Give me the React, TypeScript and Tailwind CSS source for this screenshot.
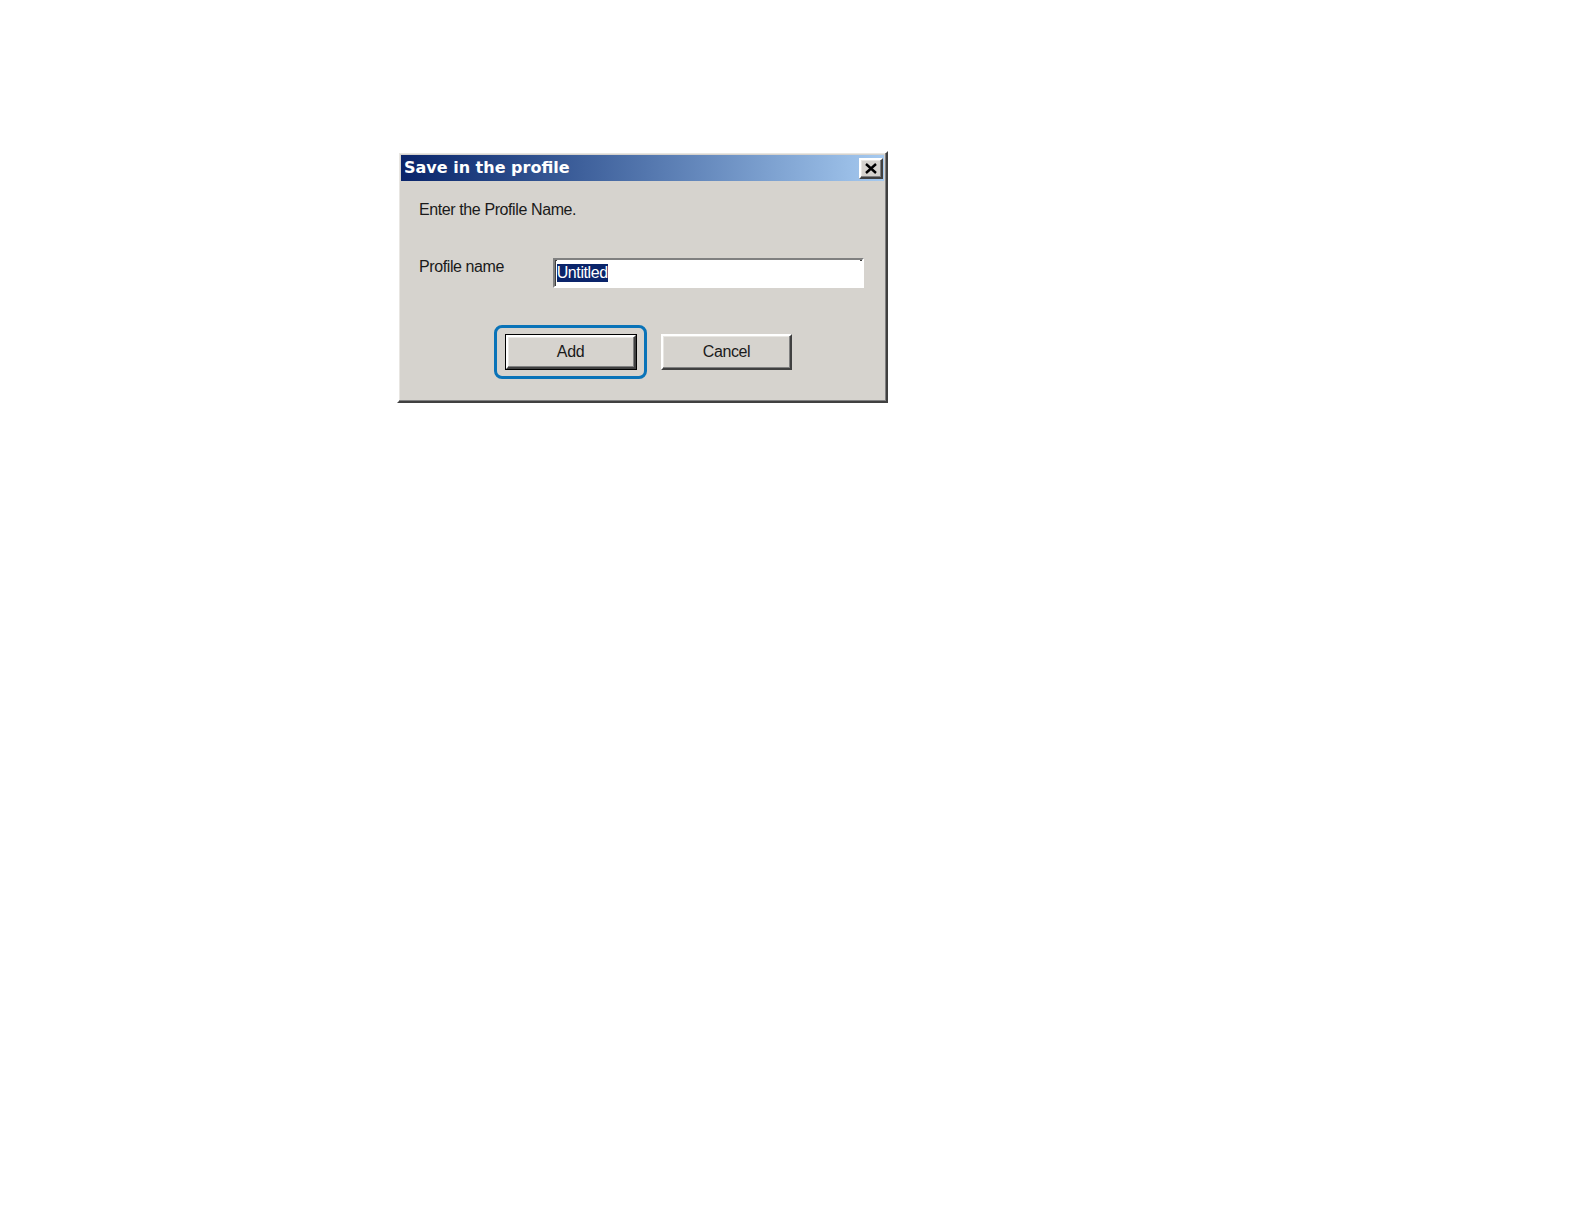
import { useEffect, useRef } from "react";

const bevelOut =
  "border-2 border-t-[#ffffff] border-l-[#ffffff] border-r-[#404040] border-b-[#404040] shadow-[inset_-1px_-1px_0_#808080,inset_1px_1px_0_#e8e6e2]";

const App = () => {
  const inputRef = useRef<HTMLInputElement>(null);

  useEffect(() => {
    inputRef.current?.focus();
    inputRef.current?.select();
  }, []);

  return (
    <div className="min-h-[1224px] w-full bg-white pt-[151px] pl-[397px]">
      <div className={`w-[491px] h-[252px] bg-[#d6d3ce] p-[2px] flex flex-col ${bevelOut}`}>
        {/* title bar */}
        <div className="h-[26px] flex items-center justify-between pl-[3px] pr-[1px] bg-gradient-to-r from-[#0a246a] to-[#a6caf0]">
          <span className="text-white font-bold text-[16px] [font-family:'DejaVu_Sans',sans-serif]">
            Save in the profile
          </span>
          <button
            className={`w-[24px] h-[21px] bg-[#d6d3ce] flex items-center justify-center ${bevelOut}`}
          >
            <svg width="12" height="11" viewBox="0 0 12 11">
              <path d="M1 1 L11 10 M11 1 L1 10" stroke="#000" strokeWidth="2.4" />
            </svg>
          </button>
        </div>

        {/* body */}
        <div className="flex-1 flex flex-col pl-[18px] pr-[20px] [font-family:'Liberation_Sans',Arial,sans-serif] text-[16px] text-[#1a1a1a] tracking-[-0.4px]">
          <p className="mt-[19px] leading-[20px]">Enter the Profile Name.</p>

          <div className="mt-[38px] flex items-start">
            <label className="w-[134px] leading-[20px] -mt-[1px]">Profile name</label>
            <div className="w-[312px] h-[30px] border-2 border-t-[#808080] border-l-[#808080] border-r-[#ffffff] border-b-[#ffffff] shadow-[inset_1px_1px_0_#404040] bg-white flex items-center px-[2px]">
              <input
                ref={inputRef}
                defaultValue="Untitled"
                className="w-full h-full outline-none bg-white text-[16px] selection:bg-[#0a246a] selection:text-white [font-family:'Liberation_Sans',Arial,sans-serif] tracking-[-0.4px]"
              />
            </div>
          </div>

          <div className="mt-[37px] ml-[75px] flex items-center gap-[14px]">
            <div className="w-[153px] h-[54px] rounded-[8px] border-[3px] border-[#0a73b8] flex items-center justify-center">
              <button className="w-[132px] h-[36px] border border-black flex">
                <span className={`flex-1 flex items-center justify-center ${bevelOut}`}>Add</span>
              </button>
            </div>
            <button className={`w-[131px] h-[36px] flex items-center justify-center ${bevelOut}`}>
              Cancel
            </button>
          </div>
        </div>
      </div>
    </div>
  );
};

export default App;
